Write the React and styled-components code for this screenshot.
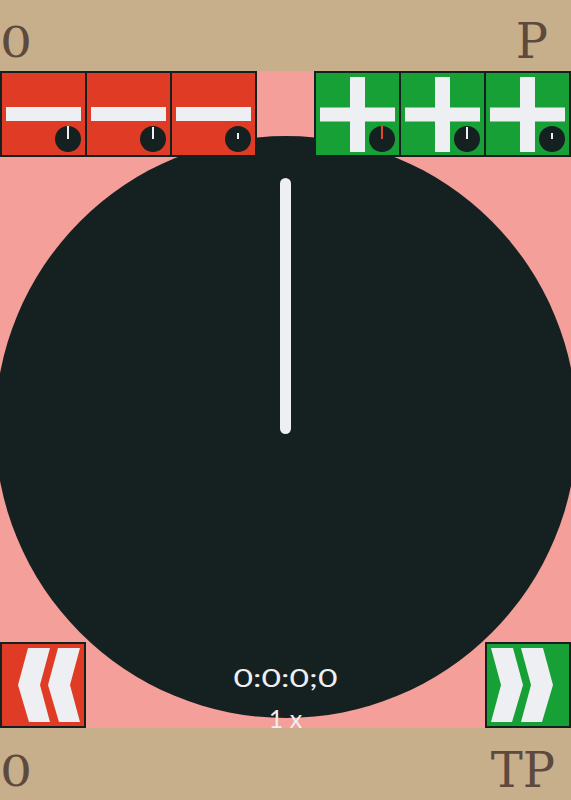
import React from "react";
import styled, { createGlobalStyle } from "styled-components";

const C = {
  tan: "#c8af8c",
  pink: "#f49f99",
  red: "#e03c25",
  green: "#17a035",
  dark: "#152020",
  white: "#edeff3",
  brown: "#5d4a3d",
  tick: "#e04a2a",
};

const GlobalStyle = createGlobalStyle`
  html, body { margin: 0; padding: 0; overflow: hidden; background: ${C.pink}; }
  body { font-family: "Lato", "Noto Sans", sans-serif; }
  * { box-sizing: border-box; }
`;

const Root = styled.div`
  width: 100%;
  height: 800px;
  display: flex;
  flex-direction: column;
  overflow: hidden;
`;

const ScoreBar = styled.header`
  flex: 0 0 ${(p) => p.$h}px;
  background: ${C.tan};
  display: flex;
  justify-content: space-between;
  align-items: flex-end;
  padding: 0 ${(p) => p.$pr}px 6px 0;
`;

const Score = styled.span`
  font-family: "DejaVu Serif", serif;
  font-size: 42px;
  line-height: 1;
  color: ${C.brown};
  display: inline-block;
  transform: scaleX(1.2);
  transform-origin: left bottom;
  margin-bottom: 1px;
`;

const Name = styled.span`
  font-family: "DejaVu Serif", serif;
  font-size: 48px;
  line-height: 1;
  color: ${C.brown};
`;

const Stage = styled.main`
  flex: 1 1 0;
  min-height: 0;
  width: 100%;
  background: ${C.pink};
  display: grid;
  grid-template-rows: minmax(0, 1fr);
  grid-template-columns: minmax(0, 1fr);
`;

const Dial = styled.div`
  grid-area: 1 / 1;
  align-self: start;
  justify-self: start;
  width: 582px;
  height: 582px;
  margin: 65px 0 0 -5.5px;
  border-radius: 50%;
  background: ${C.dark};
  display: flex;
  flex-direction: column;
  align-items: center;
  padding-top: 42px;
`;

const Needle = styled.div`
  width: 11px;
  height: 256px;
  border-radius: 6px;
  background: ${C.white};
`;

const Controls = styled.div`
  grid-area: 1 / 1;
  min-width: 0;
  min-height: 0;
  display: flex;
  flex-direction: column;
  justify-content: space-between;
  position: relative;
  z-index: 2;
`;

const Row = styled.div`
  flex: 0 0 86px;
  height: 86px;
  display: flex;
  justify-content: space-between;
  align-items: stretch;
`;

const Pad = styled.div`
  width: 45%;
  height: 86px;
  display: grid;
  grid-template-columns: repeat(3, 1fr);
  gap: 2px;
  padding: 2px;
  background: ${C.dark};
`;

const Key = styled.button`
  position: relative;
  border: 0;
  margin: 0;
  padding: 0;
  background: ${(p) => p.$color};
  display: flex;
  align-items: center;
  justify-content: center;
  cursor: pointer;
`;

const Knob = styled.span`
  position: absolute;
  right: 4px;
  bottom: 3px;
  width: 26px;
  height: 26px;
  border-radius: 50%;
  background: ${C.dark};
`;

const Tick = styled.span`
  position: absolute;
  left: 50%;
  bottom: 13px;
  width: 2px;
  margin-left: -1px;
  height: ${(p) => p.$len}px;
  background: ${(p) => p.$color};
`;

const Skip = styled.button`
  flex: 0 0 86px;
  height: 86px;
  margin: 0;
  padding: 0;
  border: 2px solid ${C.dark};
  background: ${(p) => p.$color};
  display: flex;
  cursor: pointer;
`;

const Chevrons = styled.svg`
  display: block;
  transform: ${(p) => (p.$mirror ? "scaleX(-1)" : "none")};
`;

const Readout = styled.div`
  flex: 1;
  min-height: 0;
  display: flex;
  flex-direction: column;
  align-items: center;
  padding-top: 20px;
  color: ${C.white};
  font-family: "Lato", "Noto Sans", sans-serif;
  font-size: 25px;
  line-height: 30px;
`;

const Clock = styled.span`
  display: inline-block;
  transform: scaleX(1.35);
`;

const Speed = styled.span`
  margin-top: 11px;
`;

const minusKeys = [
  { len: 13, color: C.white },
  { len: 12, color: C.white },
  { len: 6, color: C.white },
];
const plusKeys = [
  { len: 13, color: C.tick },
  { len: 12, color: C.white },
  { len: 6, color: C.white },
];

const MinusIcon = () => (
  <svg width="75" height="14" viewBox="0 0 75 14">
    <rect x="0" y="0" width="75" height="14" fill={C.white} />
  </svg>
);

const PlusIcon = () => (
  <svg width="75" height="75" viewBox="0 0 75 75">
    <rect x="30" y="0" width="15" height="75" fill={C.white} />
    <rect x="0" y="30.5" width="75" height="14" fill={C.white} />
  </svg>
);

const DoubleChevron = ({ mirror }) => (
  <Chevrons $mirror={mirror} width="82" height="82" viewBox="2 2 82 82">
    <polygon points="28,6 50,6 40,43 50,80 29,80 18,43" fill={C.white} />
    <polygon points="58,6 80,6 70,43 80,80 59,80 48,43" fill={C.white} />
  </Chevrons>
);

export default function App() {
  return (
    <Root>
      <GlobalStyle />
      <ScoreBar $h={71} $pr={23}>
        <Score>0</Score>
        <Name>P</Name>
      </ScoreBar>
      <Stage>
        <Dial>
          <Needle />
        </Dial>
        <Controls>
          <Row>
            <Pad>
              {minusKeys.map((k, i) => (
                <Key key={i} $color={C.red} aria-label="minus">
                  <MinusIcon />
                  <Knob>
                    <Tick $len={k.len} $color={k.color} />
                  </Knob>
                </Key>
              ))}
            </Pad>
            <Pad>
              {plusKeys.map((k, i) => (
                <Key key={i} $color={C.green} aria-label="plus">
                  <PlusIcon />
                  <Knob>
                    <Tick $len={k.len} $color={k.color} />
                  </Knob>
                </Key>
              ))}
            </Pad>
          </Row>
          <Row>
            <Skip $color={C.red} aria-label="rewind">
              <DoubleChevron />
            </Skip>
            <Readout>
              <Clock>0:0:0;0</Clock>
              <Speed>1 x</Speed>
            </Readout>
            <Skip $color={C.green} aria-label="forward">
              <DoubleChevron mirror />
            </Skip>
          </Row>
        </Controls>
      </Stage>
      <ScoreBar $h={72} $pr={16}>
        <Score>0</Score>
        <Name>TP</Name>
      </ScoreBar>
    </Root>
  );
}
